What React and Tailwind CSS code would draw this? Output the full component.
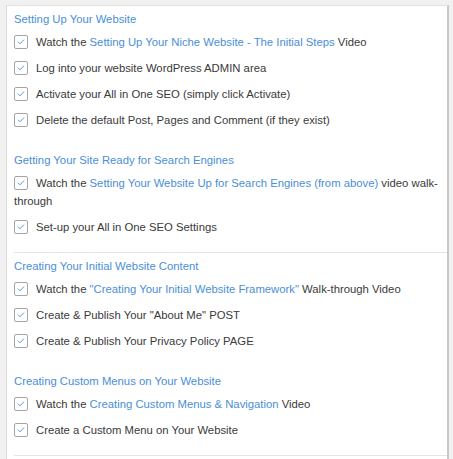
import React from "react";

const Check = () => (
  <svg
    width="14"
    height="14"
    viewBox="0 0 14 14"
    className="inline-block align-[-3px] mr-[8px]"
  >
    <rect x="0.5" y="0.5" width="13" height="13" rx="1.5" fill="#fff" stroke="#a5a5a5" />
    <polyline points="4,6.8 6,8.8 10,4.6" fill="none" stroke="#5a9ad8" strokeWidth="1" />
  </svg>
);

const L = ({ children }) => <span className="text-[#4a8fd6]">{children}</span>;

const Item = ({ children, first }) => (
  <div className={`${first ? "mt-[5px]" : "mt-[8px]"} text-[#3a3a3a]`}>
    <Check />
    {children}
  </div>
);

const Heading = ({ children, first }) => (
  <div className={`${first ? "" : "mt-[22px]"} text-[#4a8fd6]`}>{children}</div>
);

export default function App() {
  return (
    <div
      className="min-h-screen bg-[#f1f1f1] pt-[5px] pl-[6px] pr-[4px] text-[11.3px] leading-[18px]"
      style={{ fontFamily: '"Liberation Sans", Arial, sans-serif' }}
    >
      <div className="bg-white border-t border-t-[#e3e3e3] border-l border-l-[#d9d9d9] border-r-2 border-r-[#c8c8c8] min-h-[460px]">
        <div className="pl-[7px] pr-[6px] pt-[4px] pb-[16px]">
          <Heading first>Setting Up Your Website</Heading>
          <Item first>
            Watch the <L>Setting Up Your Niche Website - The Initial Steps</L> Video
          </Item>
          <Item>Log into your website WordPress ADMIN area</Item>
          <Item>Activate your All in One SEO (simply click Activate)</Item>
          <Item>Delete the default Post, Pages and Comment (if they exist)</Item>

          <Heading>Getting Your Site Ready for Search Engines</Heading>
          <Item first>
            Watch the <L>Setting Your Website Up for Search Engines (from above)</L> video walk-through
          </Item>
          <Item>Set-up your All in One SEO Settings</Item>
        </div>
        <div className="ml-[7px] h-px bg-[#e4e4e4]" />
        <div className="pl-[7px] pr-[6px] pt-[4px] pb-[16px]">
          <Heading first>Creating Your Initial Website Content</Heading>
          <Item first>
            Watch the <L>"Creating Your Initial Website Framework"</L> Walk-through Video
          </Item>
          <Item>Create &amp; Publish Your "About Me" POST</Item>
          <Item>Create &amp; Publish Your Privacy Policy PAGE</Item>

          <Heading>Creating Custom Menus on Your Website</Heading>
          <Item first>
            Watch the <L>Creating Custom Menus &amp; Navigation</L> Video
          </Item>
          <Item>Create a Custom Menu on Your Website</Item>
        </div>
        <div className="ml-[7px] h-px bg-[#e4e4e4]" />
      </div>
    </div>
  );
}
